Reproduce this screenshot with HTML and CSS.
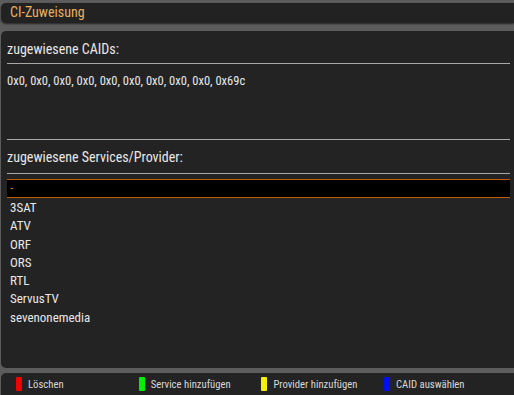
FILE: index.html
```html
<!DOCTYPE html>
<html lang="de">

<head>
    <meta charset="UTF-8" />
    <title>CI-Zuweisung</title>
    <link rel="stylesheet" href="styles.css">
</head>

<body>
    <div class="screen">
        <!-- Titel -->
        <header class="title">
            <h1>CI-Zuweisung</h1>
        </header>

        <!-- Inhalt -->
        <section class="main">
            <h2>zugewiesene CAIDs:</h2>
            <p class="caids">0x0, 0x0, 0x0, 0x0, 0x0, 0x0, 0x0, 0x0, 0x0, 0x69c</p>

            <h2 class="second">zugewiesene Services/Provider:</h2>
            <ul class="list">
                <li class="selected">-</li>
                <li>3SAT</li>
                <li>ATV</li>
                <li>ORF</li>
                <li>ORS</li>
                <li>RTL</li>
                <li>ServusTV</li>
                <li>sevenonemedia</li>
            </ul>
        </section>

        <!-- Tasten -->
        <footer class="keys">
            <div class="key"><span class="btn red"></span>Löschen</div>
            <div class="key"><span class="btn green"></span>Service hinzufügen</div>
            <div class="key"><span class="btn yellow"></span>Provider hinzufügen</div>
            <div class="key"><span class="btn blue"></span>CAID auswählen</div>
        </footer>
    </div>
</body>

</html>
```

FILE: styles.css
```css
* {
    margin: 0;
    padding: 0;
    box-sizing: border-box;
}

body {
    background-color: #5c5c5c;
    font-family: "Roboto Condensed", "Liberation Sans Narrow", Roboto, sans-serif;
    color: #e8e8e8;
    width: 514px;
    height: 395px;
    overflow: hidden;
}

.screen {
    display: flex;
    flex-direction: column;
    height: 395px;
    padding: 3px 0 0 1px;
}

/* Titel */
.title {
    height: 20px;
    background-color: #222;
    border-radius: 5px 0 0 5px;
    box-shadow: 0 1px 2px rgba(0, 0, 0, 0.6);
    padding-left: 9px;
}

.title h1 {
    color: #e7b25e;
    font-size: 14px;
    font-weight: normal;
    line-height: 18px;
}

/* Inhalt */
.main {
    margin-top: 8px;
    height: 337px;
    background-color: #232323;
    border-radius: 5px 0 0 5px;
    padding: 9px 4px 0 6px;
}

.main h2 {
    font-size: 14px;
    font-weight: normal;
    line-height: 18px;
    padding-bottom: 5px;
    border-bottom: 1px solid #a8a8a8;
}

.caids {
    font-size: 12.5px;
    line-height: 16px;
    padding-top: 9px;
    height: 76px;
    border-bottom: 1px solid #a8a8a8;
}

.main h2.second {
    margin-top: 8px;
    padding-bottom: 7px;
}

.list {
    list-style: none;
    margin-top: 5px;
}

.list li {
    font-size: 13px;
    height: 18.3px;
    line-height: 18px;
    padding-left: 3px;
}

.list li.selected {
    background-color: #000;
    border-top: 1px solid #c25c00;
    border-bottom: 1px solid #c25c00;
    color: #d96b10;
    height: 19px;
    line-height: 16px;
    margin-bottom: 1px;
}

/* Tasten */
.keys {
    margin-top: 5px;
    flex: 1;
    background-color: #232323;
    border-radius: 5px 0 0 0;
    display: flex;
    align-items: center;
    padding-left: 15px;
}

.key {
    width: 122.7px;
    display: flex;
    align-items: center;
    font-size: 10.7px;
    color: #d8d8d8;
}

.btn {
    width: 6px;
    height: 14px;
    margin-right: 6px;
    border-radius: 1px;
}

.red { background-color: #f00000; }
.green { background-color: #00f000; }
.yellow { background-color: #f8f000; }
.blue { background-color: #0010f0; }
```
